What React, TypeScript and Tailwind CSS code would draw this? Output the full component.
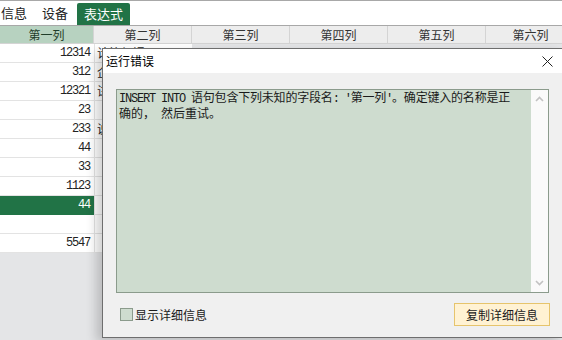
import React from "react";

const rows: { v: string; c2?: string; sel?: boolean }[] = [
  { v: "12314", c2: "计算机课" },
  { v: "312", c2: "企业" },
  { v: "12321", c2: "试验" },
  { v: "23", c2: "" },
  { v: "233", c2: "说明" },
  { v: "44", c2: "" },
  { v: "33", c2: "" },
  { v: "1123", c2: "" },
  { v: "44", sel: true },
  { v: "" },
  { v: "5547" },
];

const headers = [
  { t: "第一列", w: "w-[94px]", first: true },
  { t: "第二列", w: "w-[98px]" },
  { t: "第三列", w: "w-[98px]" },
  { t: "第四列", w: "w-[98px]" },
  { t: "第五列", w: "w-[98px]" },
  { t: "第六列", w: "w-[90px]" },
];

export default function App() {
  return (
    <div className="relative w-[562px] h-[340px] overflow-hidden bg-[#e4e5e7] [font-family:'Noto_Sans_CJK_SC',sans-serif] text-[#222]">
      {/* tab bar */}
      <div className="h-[25px] bg-white border-t border-[#a8a8a8] flex items-end text-[13px]">
        <div className="h-[24px] flex items-center pl-[1px] w-[42px]">信息</div>
        <div className="h-[24px] flex items-center w-[35px]">设备</div>
        <div className="h-[22px] flex items-center px-[7px] bg-[#217346] text-white rounded-t-[2px]">表达式</div>
      </div>
      {/* header */}
      <div className="flex h-[19px] border-t border-[#a8a8a8] text-[12px]">
        {headers.map((h, i) => (
          <div
            key={i}
            className={
              h.w +
              " shrink-0 flex items-center justify-center border-r border-b border-[#d4d4d4] " +
              (h.first ? "bg-[#b7d2c0] text-[#1f3d2a]" : "bg-[#ededed] text-[#333]")
            }
          >
            {h.t}
          </div>
        ))}
      </div>
      {/* rows */}
      <div className="flex flex-col">
        {rows.map((r, i) => (
          <div key={i} className="flex h-[19px]">
            <div
              className={
                "w-[94px] shrink-0 flex items-center justify-end pr-[4px] border-b [font-family:'Liberation_Mono',monospace] text-[12px] tracking-[-1.2px] " +
                (r.sel ? "bg-[#217346] text-white border-[#217346]" : "bg-white text-[#222] border-[#e3e3e3]")
              }
            >
              {r.v}
            </div>
            <div className="w-[98px] shrink-0 flex items-center pl-[2px] bg-white border-l border-b border-[#e3e3e3] text-[12px] overflow-hidden whitespace-nowrap">
              {r.c2}
            </div>
          </div>
        ))}
      </div>

      {/* dialog */}
      <div className="absolute left-[102px] top-[48px] w-[462px] h-[290px] border border-[#6e6e6e] bg-[#f0f0f0] flex flex-col shadow-[-6px_4px_10px_rgba(0,0,0,0.18)]">
        <div className="h-[24px] bg-white flex items-center justify-between pl-[3px] pr-[10px] text-[12px] text-black">
          <span>运行错误</span>
          <svg width="11" height="11" viewBox="0 0 11 11">
            <path d="M0.5 0.5 L10.5 10.5 M10.5 0.5 L0.5 10.5" stroke="#222" strokeWidth="1" />
          </svg>
        </div>
        <div className="flex flex-col pl-[13px] pt-[16px]">
          <div className="w-[433px] h-[204px] border border-[#8b9b8c] bg-[#cedccf] flex">
            <div className="flex-1 pl-[2px] pt-[0px] text-[12px] leading-[13px] text-[#1a1a1a] whitespace-nowrap">
              <div className="tracking-[-0.2px]">
                <span className="[font-family:'Liberation_Mono',monospace] tracking-[-1.2px]">INSERT INTO </span>
                语句包含下列未知的字段名
                <span className="[font-family:'Liberation_Mono',monospace] tracking-[-1.2px]">: '</span>
                第一列
                <span className="[font-family:'Liberation_Mono',monospace] tracking-[-1.2px]">'</span>
                。确定键入的名称是正
              </div>
              <div>
                确的，<span className="[font-family:'Liberation_Mono',monospace] tracking-[-1.2px]"> </span>然后重试。
              </div>
            </div>
            <div className="w-[17px] bg-[#fafafa] flex flex-col items-center justify-between py-[6px]">
              <svg width="9" height="6" viewBox="0 0 9 6">
                <path d="M1 5 L4.5 1.5 L8 5" stroke="#c2c2c2" strokeWidth="1.6" fill="none" />
              </svg>
              <svg width="9" height="6" viewBox="0 0 9 6">
                <path d="M1 1 L4.5 4.5 L8 1" stroke="#c2c2c2" strokeWidth="1.6" fill="none" />
              </svg>
            </div>
          </div>
          <div className="w-[434px] flex items-center justify-between mt-[10px]">
            <div className="flex items-center pl-[4px] text-[12px] text-[#1a1a1a]">
              <div className="w-[13px] h-[13px] border border-[#8b9b8c] bg-[#cedccf] mr-[2px]" />
              <span>显示详细信息</span>
            </div>
            <div className="w-[96px] h-[23px] border border-[#e6c46c] bg-[#fff2d3] flex items-center justify-center text-[12px] text-[#1a1a1a]">
              复制详细信息
            </div>
          </div>
        </div>
      </div>
    </div>
  );
}
